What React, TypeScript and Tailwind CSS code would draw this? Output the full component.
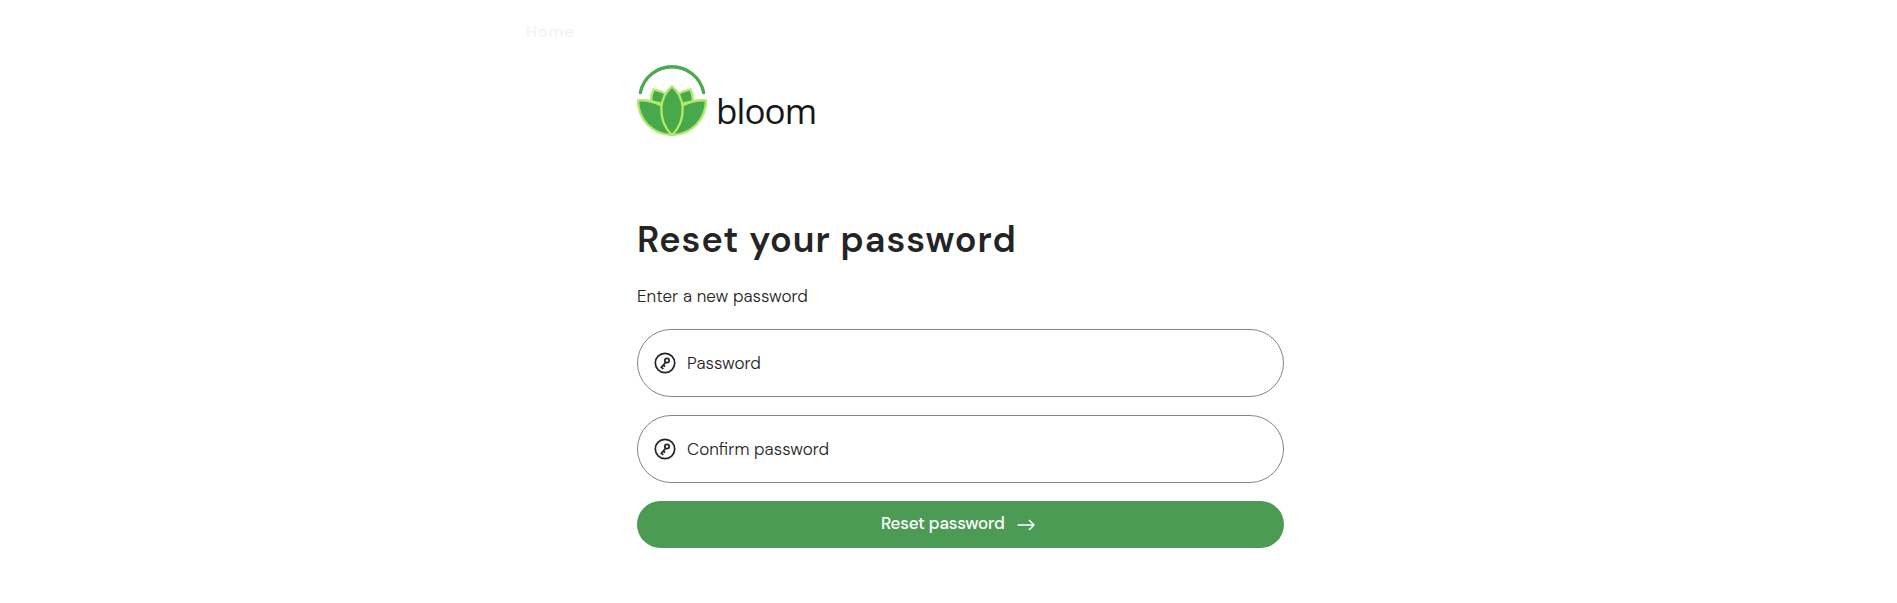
function BloomMark() {
  return (
    <svg className="h-[74px] w-[72px] shrink-0" viewBox="18 9 216 222" fill="none" aria-hidden="true">
      <path d="M31 98A96.9 96.9 0 0 1 221 98" stroke="#4aaa50" strokeWidth="10" strokeLinecap="round" />
      <g fill="#48a94a" stroke="#b4e76e" strokeWidth="7" strokeLinejoin="round">
        <path d="M71 88Q93 92 110 105L100 132L63 124Q63 104 71 88Z" />
        <path d="M181 88Q159 92 142 105L152 132L189 124Q189 104 181 88Z" />
        <path d="M24 121Q66 119 97 138L126 225A103 103 0 0 1 24 121Z" />
        <path d="M228 121Q186 119 155 138L126 225A103 103 0 0 0 228 121Z" />
        <path d="M126 79Q155 103 158 143Q160 193 126 225Q92 193 94 143Q97 103 126 79Z" />
      </g>
    </svg>
  );
}

function KeyIcon() {
  return (
    <svg className="size-[22px] shrink-0" viewBox="0 0 22 22" fill="none" stroke="#242424" strokeWidth="1.7" aria-hidden="true">
      <circle cx="11" cy="11" r="9.7" />
      <circle cx="13" cy="8.5" r="2.2" />
      <path d="M11.7 10.2 7.3 15.4l2.1 1.5M9.2 13.1l1.9 1.4" />
    </svg>
  );
}

function Field({ label }: { label: string }) {
  return (
    <label className="flex h-[68px] items-center gap-[11px] rounded-full border border-[#858585] pb-px pl-[16px] text-[#242424]">
      <KeyIcon />
      <span className="text-[17px] leading-6 font-light tracking-[0.03px] [font-feature-settings:'liga'_1]">{label}</span>
    </label>
  );
}

export default function App() {
  return (
    <div className="flex h-[603px] flex-col overflow-hidden bg-white font-['DM_Sans','Inter',sans-serif]">
      <nav className="pt-[20px] pl-[526px]">
        <a className="block h-[25px] text-[16px] leading-6 font-medium tracking-[1px] text-[#f3f3f3]">Home</a>
      </nav>
      <main className="ml-[637px] flex w-[647px] flex-col pt-[18px]">
        <div className="-ml-px flex h-[74px] gap-[8px]">
          <BloomMark />
          <span className="pt-[24px] font-['Open_Sans',sans-serif] text-[35px] leading-[48px] tracking-[-0.9px] text-[#171717]">
            bloom
          </span>
        </div>
        <h1 className="mt-[79px] h-12 text-[36px] leading-[48px] font-semibold tracking-[1px] whitespace-nowrap text-[#242424]">
          Reset your password
        </h1>
        <p className="mt-[20px] h-6 text-[17px] leading-6 font-light tracking-[0.03px] whitespace-nowrap text-[#242424]">
          Enter a new password
        </p>
        <form className="mt-[21px] flex flex-col gap-[18px]">
          <Field label="Password" />
          <Field label="Confirm password" />
          <button type="button" className="flex h-[47px] items-center rounded-full bg-[#4b9b54] pb-[3px] pl-[244px] text-white">
            <span className="w-[123px] text-left text-[17px] leading-6 font-medium tracking-[-0.22px] whitespace-nowrap">
              Reset password
            </span>
            <svg className="mt-[3px] ml-[13px] h-[12px] w-[18px]" viewBox="0 0 18 12" fill="none" stroke="currentColor" strokeWidth="1.5" aria-hidden="true">
              <path d="M.5 6H17M12 1l5 5-5 5" />
            </svg>
          </button>
        </form>
      </main>
    </div>
  );
}
